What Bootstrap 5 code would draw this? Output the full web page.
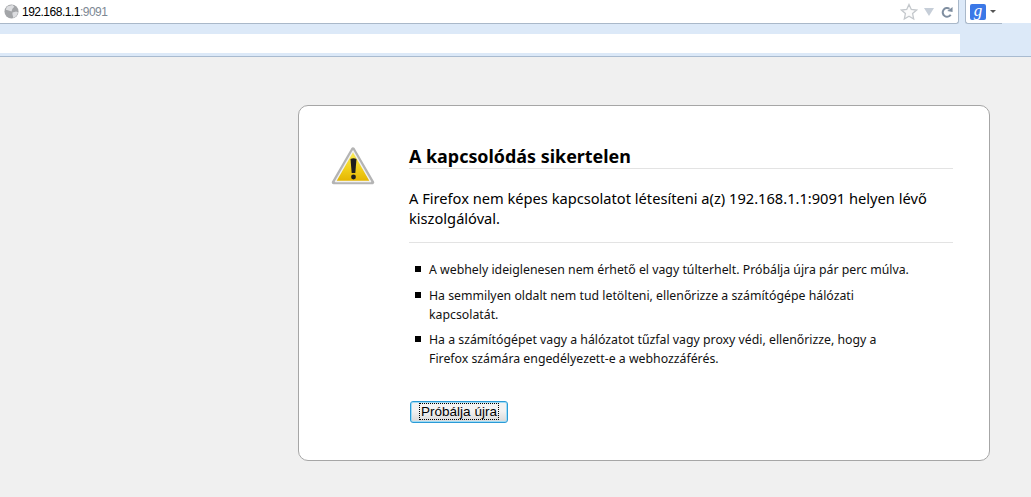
<!DOCTYPE html>
<html lang="hu">
<head>
    <meta charset="UTF-8">
    <meta name="viewport" content="width=device-width, initial-scale=1.0">
    <title>Problem loading page</title>
    <link href="https://cdn.jsdelivr.net/npm/bootstrap@5.3.0/dist/css/bootstrap.min.css" rel="stylesheet">
    <script src="https://cdn.jsdelivr.net/npm/bootstrap@5.3.0/dist/js/bootstrap.bundle.min.js"></script>
    <style>
        html, body { height: 100%; }
        body { background: #f0f0f0; font-family: "Noto Sans", "Open Sans", sans-serif; color: #000; overflow: hidden; }

        /* Browser chrome */
        .chrome-top { height: 24px; background: #dce9f8; }
        .url-box { width: 959px; height: 24px; background: #fff; border: 1px solid #a9b8c9; border-width: 0 1px 1px 0; border-radius: 0 0 3px 0; padding-left: 4px; }
        .url-text { font-family: "Liberation Sans", sans-serif; font-size: 12px; letter-spacing: -.5px; margin-left: 3px; }
        .url-port { color: #7d8894; }
        .search-box { width: 37px; height: 24px; margin-left: 6px; background: #fff; border: 1px solid #a9b8c9; border-width: 0 0 1px 1px; border-radius: 0 0 0 3px; padding-left: 4px; }
        .search-fill { flex: 1; height: 23px; background: #fff; }
        .g-logo { width: 16px; height: 16px; background: #3b78e7; border-radius: 2px; color: #fff; font: italic 17px/14px "Liberation Serif", serif; text-align: center; }
        .g-caret { width: 0; height: 0; border: 3px solid transparent; border-top: 3px solid #555; border-bottom: 0; margin-left: 4px; }
        .chrome-bottom { height: 33px; background: #dce9f8; border-bottom: 1px solid #a9bbd0; padding-top: 10px; }
        .bar-strip { width: 960px; height: 19px; background: #fff; }
        .star-icon { margin-right: 1px; }
        .arrow-icon { margin-left: 5px; }
        .reload-icon { margin-left: 7px; margin-right: 5px; }

        /* Error card */
        .page-area { padding: 48px 41px 0 298px; }
        .err-card { height: 356px; background: #fff; border: 1px solid #a6a6a6; border-radius: 10px; padding: 38px 36px 0 32px; }
        .err-icon { width: 44px; height: 40px; flex: none; margin-top: 2px; margin-right: 34px; }
        .err-body { flex: 1; min-width: 0; }
        .err-title { font-size: 17.9px; line-height: 24px; font-weight: 700; margin: 0; border-bottom: 1px solid #e3e3e3; }
        .err-lead { font-size: 14.65px; line-height: 20px; margin: 19px 0 0; padding-bottom: 14px; border-bottom: 1px solid #e3e3e3; }
        .err-list { list-style: none; margin: 17px 0 0; padding: 0 38px 0 6px; font-size: 12.3px; line-height: 19px; color: #111; }
        .err-list li { display: flex; margin-bottom: 6.5px; }
        .err-bullet { flex: none; width: 6px; height: 6px; background: #000; margin: 6px 8px 0 0; }
        .retry-btn { display: block; width: 98px; height: 22px; margin: 32.5px 0 0 1px; padding: 0; border: 1px solid #2a9ad6; border-radius: 3px; background: linear-gradient(#f2f2f2 45%, #d8d8d8); font-family: "Liberation Sans", sans-serif; font-size: 13.5px; line-height: 18px; color: #000; box-shadow: inset 0 0 0 1px #9edcf6; }
        .retry-label { outline: 1px dotted #000; padding: 0 1px; }
    </style>
</head>
<body>

    <div class="chrome-top d-flex">
        <div class="url-box d-flex align-items-center">
            <svg width="15" height="15" viewBox="0 0 16 16">
                <circle cx="8" cy="8" r="7.5" fill="#a3a5a8"/>
                <path d="M5 2l4-1 2 2-2 2-1 3-3-1-3-1 1-3zM9 9l4-1 2 1-2 4-3 2-1-4z" fill="#dcdde0"/>
            </svg>
            <span class="url-text">192.168.1.1<span class="url-port">:9091</span></span>
            <svg class="star-icon ms-auto" width="18" height="18" viewBox="0 0 18 18">
                <path d="M9 1.500l2.300 5 5.200.6-3.900 3.500 1.100 5.400L9 13.300l-4.700 2.700 1.100-5.400L1.500 7.100l5.200-.6z" fill="#fbfbfb" stroke="#c4c8cc" stroke-width="1.300"/>
            </svg>
            <svg class="arrow-icon" width="10" height="8" viewBox="0 0 10 8"><path d="M0 0h10L5 8z" fill="#c6ced8"/></svg>
            <svg class="reload-icon" width="12" height="12" viewBox="0 0 13 13">
                <path d="M10.500 9.500A4.700 4.700 0 1 1 9.200 3" fill="none" stroke="#7f8ea0" stroke-width="2.200"/>
                <path d="M6.800 5.500L12.500 1v5.500z" fill="#7f8ea0"/>
            </svg>
        </div>
        <div class="search-box d-flex align-items-center">
            <div class="g-logo">g</div>
            <div class="g-caret"></div>
        </div>
        <div class="search-fill"></div>
    </div>
    <div class="chrome-bottom">
        <div class="bar-strip"></div>
    </div>

    <div class="page-area">
        <div class="err-card d-flex">
            <svg class="err-icon" viewBox="0 0 44 40">
                <defs>
                    <linearGradient id="warnFill" x1="0" y1="0" x2="0" y2="1">
                        <stop offset="0" stop-color="#fbee60"/>
                        <stop offset=".55" stop-color="#f2d21e"/>
                        <stop offset="1" stop-color="#e4b400"/>
                    </linearGradient>
                </defs>
                <path d="M22 3L41.500 36.500H2.500z" fill="#e9e9e9" stroke="#b4b4b4" stroke-width="3.500" stroke-linejoin="round"/>
                <path d="M22 5L39.500 35.500H4.500z" fill="url(#warnFill)" stroke="#f1f1f1" stroke-width="1.500" stroke-linejoin="round"/>
                <path d="M19.500 13q3-1.500 6 0l-1.200 14h-3.600z" fill="#1e1e1e"/>
                <circle cx="22.500" cy="31" r="2.400" fill="#1e1e1e"/>
            </svg>
            <div class="err-body">
                <h1 class="err-title">A kapcsolódás sikertelen</h1>
                <p class="err-lead">A Firefox nem képes kapcsolatot létesíteni a(z) 192.168.1.1:9091 helyen lévő kiszolgálóval.</p>
                <ul class="err-list">
                    <li><span class="err-bullet"></span><span>A webhely ideiglenesen nem érhető el vagy túlterhelt. Próbálja újra pár perc múlva.</span></li>
                    <li><span class="err-bullet"></span><span>Ha semmilyen oldalt nem tud letölteni, ellenőrizze a számítógépe hálózati kapcsolatát.</span></li>
                    <li><span class="err-bullet"></span><span>Ha a számítógépet vagy a hálózatot tűzfal vagy proxy védi, ellenőrizze, hogy a Firefox számára engedélyezett-e a webhozzáférés.</span></li>
                </ul>
                <button type="button" class="retry-btn"><span class="retry-label">Próbálja újra</span></button>
            </div>
        </div>
    </div>

</body>
</html>
